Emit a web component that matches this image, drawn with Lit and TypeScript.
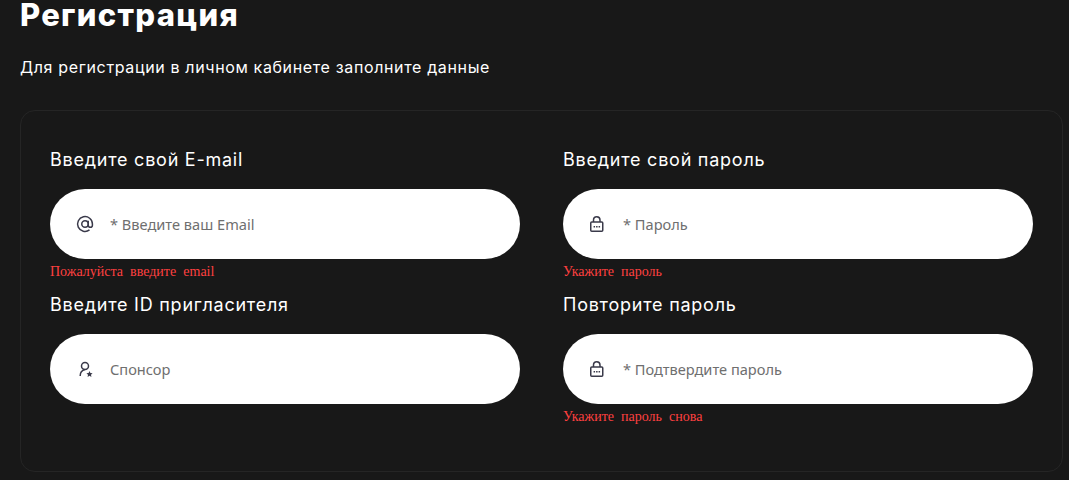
import { LitElement, html, css, svg } from "lit";
import { customElement } from "lit/decorators.js";

const at = svg`<circle cx="12" cy="12" r="3.9"/><path d="M15.9 8.100v5.400a2.500 2.500 0 0 0 5 0V12a8.900 8.900 0 1 0-3.500 7.100"/>`;
const lock = svg`<rect x="3.300" y="9.600" width="14.400" height="11.100" rx="1.200"/><path d="M6.600 9.600V7.200a3.900 3.900 0 0 1 7.800 0v2.400"/><path d="M6.700 15.200h1.800M9.700 15.200h1.800M12.700 15.200h1.800"/>`;
const user = svg`<circle cx="12" cy="8.400" r="4.200"/><path d="M6.200 20.400c0-4.500 2.200-7 5.800-7.800"/><path class="fill" d="M17.400 14.400l1.100 2.400 2.600.3-1.900 1.800.5 2.600-2.300-1.300-2.300 1.300.5-2.600-1.900-1.800 2.600-.3z"/>`;

interface Field { label: string; ph: string; icon: unknown; err?: string; }
const fields: Field[] = [
  { label: "Введите свой E-mail", ph: "* Введите ваш Email", icon: at, err: "Пожалуйста введите email" },
  { label: "Введите свой пароль", ph: "* Пароль", icon: lock, err: "Укажите пароль" },
  { label: "Введите ID пригласителя", ph: "Спонсор", icon: user },
  { label: "Повторите пароль", ph: "* Подтвердите пароль", icon: lock, err: "Укажите пароль снова" },
];

@customElement("app-root")
export class AppRoot extends LitElement {
  static styles = css`
    :host { display: block; background: #181818; height: 480px; overflow: hidden; padding: 0 6px 0 20px; box-sizing: border-box; color: #fff; font-family: "Inter", "Noto Sans", sans-serif; }
    h1 { margin: 0; font-size: 31px; line-height: 30px; height: 30px; font-weight: 800; letter-spacing: 1.3px; }
    .sub { margin: 27px 0 0; font-size: 16px; line-height: 20px; font-weight: 400; letter-spacing: 0.64px; }
    .card { margin-top: 33px; height: 362px; box-sizing: border-box; border: 1px solid #252525; border-radius: 15px; padding: 38px 29px 0; display: grid; grid-template-columns: 470px 470px; column-gap: 43px; grid-auto-rows: 145px; }
    label { display: block; font-size: 18px; line-height: 22px; font-weight: 400; letter-spacing: 0.76px; }
    .input { margin-top: 18px; height: 70px; border-radius: 35px; background: #fff; display: flex; align-items: center; padding-left: 25px; gap: 15px; color: #6f6f6f; font-family: "Noto Sans", sans-serif; font-size: 14.6px; }
    svg { width: 20px; height: 20px; fill: none; stroke: #3a3a4a; stroke-width: 1.8; flex: none; }
    svg .fill { fill: #3a3a4a; stroke: none; }
    .err { color: #ff4040; font-family: "Liberation Serif", serif; font-size: 14px; line-height: 16px; margin-top: 5px; word-spacing: 3.6px; }
  `;
  render() {
    return html`
      <h1>Регистрация</h1>
      <p class="sub">Для регистрации в личном кабинете заполните данные</p>
      <div class="card">
        ${fields.map(f => html`<div>
          <label>${f.label}</label>
          <div class="input"><svg viewBox="0 0 24 24">${f.icon}</svg><span>${f.ph}</span></div>
          ${f.err ? html`<div class="err">${f.err}</div>` : ""}
        </div>`)}
      </div>`;
  }
}
